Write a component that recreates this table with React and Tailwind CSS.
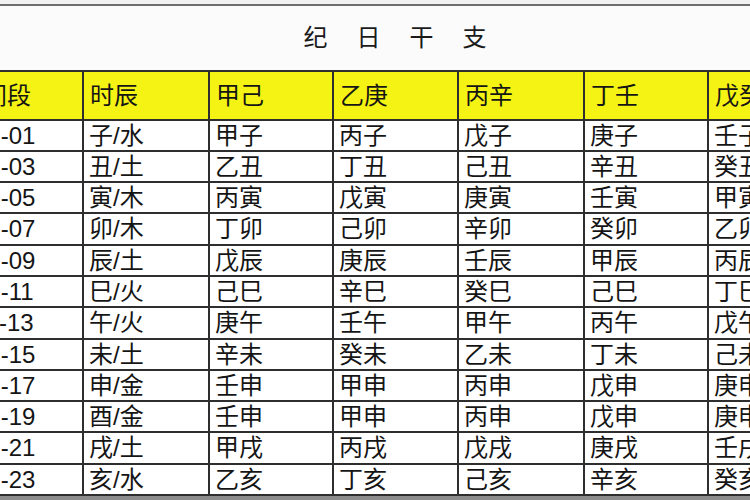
import React from "react";

const headers = ["时间段", "时辰", "甲己", "乙庚", "丙辛", "丁壬", "戊癸"];
const rows = [
  ["23-01", "子/水", "甲子", "丙子", "戊子", "庚子", "壬子"],
  ["01-03", "丑/土", "乙丑", "丁丑", "己丑", "辛丑", "癸丑"],
  ["03-05", "寅/木", "丙寅", "戊寅", "庚寅", "壬寅", "甲寅"],
  ["05-07", "卯/木", "丁卯", "己卯", "辛卯", "癸卯", "乙卯"],
  ["07-09", "辰/土", "戊辰", "庚辰", "壬辰", "甲辰", "丙辰"],
  ["09-11", "巳/火", "己巳", "辛巳", "癸巳", "己巳", "丁巳"],
  ["11-13", "午/火", "庚午", "壬午", "甲午", "丙午", "戊午"],
  ["13-15", "未/土", "辛未", "癸未", "乙未", "丁未", "己未"],
  ["15-17", "申/金", "壬申", "甲申", "丙申", "戊申", "庚申"],
  ["17-19", "酉/金", "壬申", "甲申", "丙申", "戊申", "庚申"],
  ["19-21", "戌/土", "甲戌", "丙戌", "戊戌", "庚戌", "壬戌"],
  ["21-23", "亥/水", "乙亥", "丁亥", "己亥", "辛亥", "癸亥"],
];
const rowH = ["h-[29px]", "h-[29px]", "h-[29px]", "h-[30px]", "h-[29px]", "h-[29px]", "h-[30px]", "h-[29px]", "h-[29px]", "h-[29px]", "h-[30px]", "h-[29px]"];

const font = { fontFamily: '"Liberation Sans", "Noto Sans CJK SC", sans-serif' };

export default function App() {
  return (
    <div className="w-[750px] h-[500px] overflow-hidden bg-white text-[#151515]" style={font}>
      <div className="h-[4px] bg-[#f2f2f2]" />
      <div className="h-[2px] bg-[#6e6e6e]" />
      <div className="-ml-[45px] w-[880px]">
        <div className="h-[64px] flex items-center justify-center gap-[29px] text-[24px] leading-none text-[#1a1a1a] bg-[#fbfbfb]">
          <span>纪</span>
          <span>日</span>
          <span>干</span>
          <span>支</span>
        </div>
        <div className="grid grid-cols-[127px_124px_122px_123px_124px_122px_125px] gap-[2px] py-[2px] bg-[#2e2e2e] text-[24px] leading-none">
          {headers.map((h, i) => (
            <div
              key={h}
              className={`h-[47px] bg-[#f5f313] flex items-center ${i === 0 ? "pl-[4px]" : "pl-[6px]"}`}
            >
              {h}
            </div>
          ))}
          {rows.map((r, ri) =>
            r.map((c, ci) => (
              <div
                key={ri + "-" + ci}
                className={`${rowH[ri]} bg-white flex items-center ${ci === 0 ? "pl-[19px]" : "pl-[5px]"}`}
              >
                {c}
              </div>
            ))
          )}
        </div>
      </div>
      <div className="h-[6px] bg-[#8c8c8c]" />
    </div>
  );
}
